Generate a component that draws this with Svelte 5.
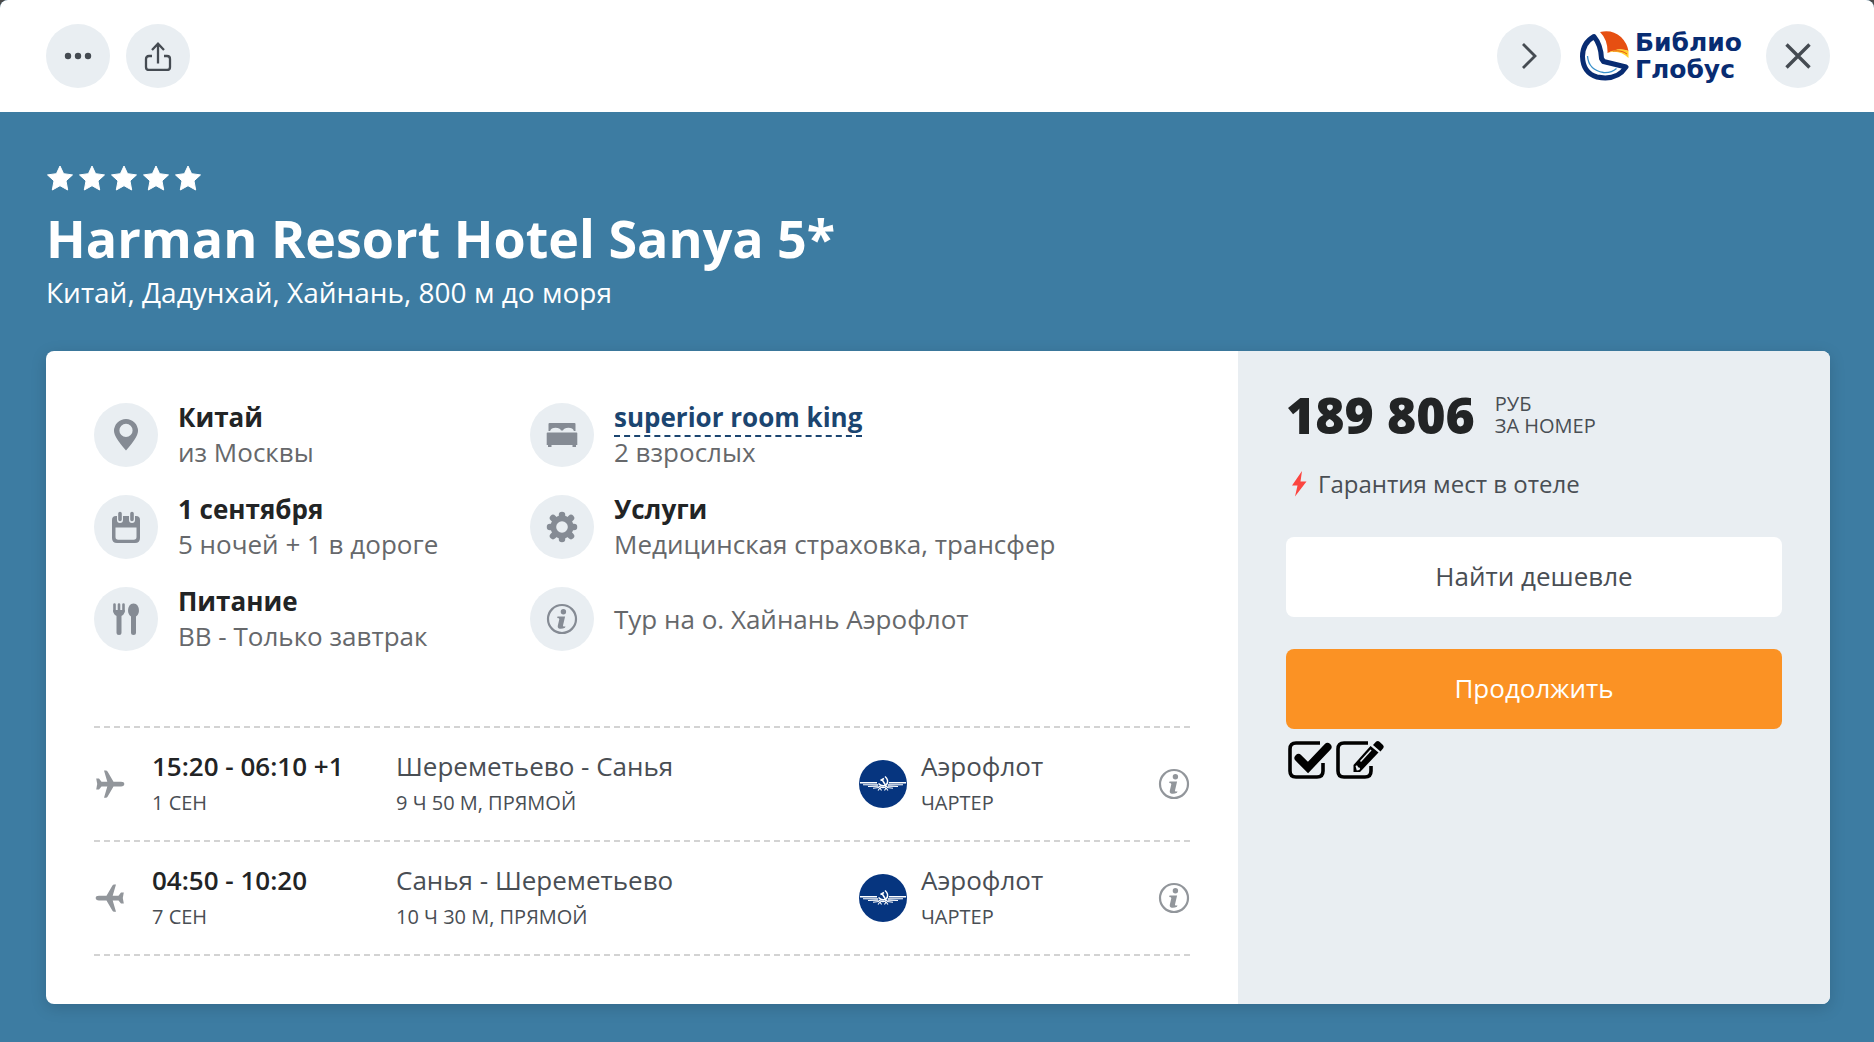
<script>
  const details = [
    { icon: 'pin', title: 'Китай', text: 'из Москвы' },
    { icon: 'bed', title: 'superior room king', text: '2 взрослых', link: true },
    { icon: 'calendar', title: '1 сентября', text: '5 ночей + 1 в дороге' },
    { icon: 'gear', title: 'Услуги', text: 'Медицинская страховка, трансфер' },
    { icon: 'food', title: 'Питание', text: 'BB - Только завтрак' },
    { icon: 'info', title: '', text: 'Тур на о. Хайнань Аэрофлот' }
  ];

  const flights = [
    { back: false, time: '15:20 - 06:10 +1', date: '1 сен', route: 'Шереметьево - Санья', length: '9 ч 50 м, прямой' },
    { back: true, time: '04:50 - 10:20', date: '7 сен', route: 'Санья - Шереметьево', length: '10 ч 30 м, прямой' }
  ];
</script>

{#snippet infoIcon()}
  <svg width="32" height="32" viewBox="0 0 32 32" aria-hidden="true">
    <circle cx="16" cy="16" r="14" fill="none" stroke="currentColor" stroke-width="2.2" />
    <circle cx="17.4" cy="8.8" r="2.7" fill="currentColor" />
    <path d="M11.500 13.400h7.600l-2.100 9q-.3 1.700 2.400.8l-.4 1.500q-2.500 1.200-5 1-2.700-.3-2.200-3l1.500-6.500q.2-1.200-2.100-1.200z" fill="currentColor" />
  </svg>
{/snippet}

<div class="page">
  <header class="topbar">
    <div class="group">
      <button class="round" aria-label="Ещё">
        <svg width="28" height="8" viewBox="0 0 28 8" fill="#454b52"><circle cx="4" cy="4" r="3.200" /><circle cx="14" cy="4" r="3.200" /><circle cx="24" cy="4" r="3.200" /></svg>
      </button>
      <button class="round" aria-label="Поделиться">
        <svg width="28" height="30" viewBox="0 0 28 30" fill="none" stroke="#454b52" stroke-width="2.300"><path d="M14 22.500V3M8 9l6-6.300L20 9M8 15H5q-3 0-3 3v8q0 3 3 3h18q3 0 3-3v-8q0-3-3-3h-3" /></svg>
      </button>
    </div>
    <div class="group">
      <button class="round" aria-label="Следующий">
        <svg width="18" height="28" viewBox="0 0 18 28" fill="none" stroke="#454b52" stroke-width="2.800"><path d="M3 2l12 12L3 26" /></svg>
      </button>
      <a class="brand" href="#operator">
        <svg width="52" height="52" viewBox="0 0 52 52" aria-hidden="true">
          <path d="M15 6.500Q3.500 13 3.500 26.500 4 43 18 47 38 51 47 37L24.500 31.500 22.500 28.500Q22 15 15 6.500z" fill="#fff" stroke="#082c72" stroke-width="5" stroke-linejoin="round" />
          <path d="M8.500 26q1 14 16 16.500 8 .5 13-4" fill="none" stroke="#3a91cb" stroke-width="1.300" />
          <path d="M21 2Q33-1 42 7q6 6 7.500 14Q40 17 28.500 23 29 10 21 2z" fill="#e64f12" />
          <path d="M28.500 23Q40 16.500 49.500 21v7Q40 19 28.500 23z" fill="#ffd02c" />
          <path d="M34 21q9-1 14 3" fill="none" stroke="#e64f12" stroke-width="1" />
        </svg>
        <span>Библио<br />Глобус</span>
      </a>
      <button class="round" aria-label="Закрыть">
        <svg width="28" height="28" viewBox="0 0 28 28" fill="none" stroke="#454b52" stroke-width="3.400"><path d="M2.500 2.500l23 23M25.500 2.500l-23 23" /></svg>
      </button>
    </div>
  </header>

  <main>
    <div class="stars" role="img" aria-label="5 звёзд">
      {#each [1, 2, 3, 4, 5] as star (star)}
        <svg width="28" height="28" viewBox="0 0 28 28"><path d="M14 2l3.600 7.700 8.900 1.200-6.500 6 1.700 9.100L14 21.700 6.300 26 8 16.900l-6.500-6 8.900-1.200z" fill="#fff" stroke="#fff" stroke-linejoin="round" /></svg>
      {/each}
    </div>
    <h1>Harman Resort Hotel Sanya 5*</h1>
    <p class="place">Китай, Дадунхай, Хайнань, 800 м до моря</p>

    <div class="card">
      <section class="tour">
        <div class="details">
          {#each details as item (item.icon)}
            <div class="detail">
              <span class="round">
                {#if item.icon === 'pin'}
                  <svg width="32" height="32" viewBox="0 0 32 32"><path fill-rule="evenodd" d="M16 0a12 12 0 0 0-12 12q0 6 12 19.500Q28 18 28 12A12 12 0 0 0 16 0zm0 4.800a6.600 6.600 0 1 1 0 13.200 6.600 6.600 0 0 1 0-13.200z" fill="currentColor" /></svg>
                {:else if item.icon === 'bed'}
                  <svg width="32" height="32" viewBox="0 0 32 32" fill="currentColor"><path d="M3.500 4h25q1 0 1 1v7h-1.600q-1-3.300-5.500-3.300-4.400 0-5.400 2.800h-2Q14 8.700 9.600 8.700q-4.500 0-5.500 3.300H2.500V5q0-1 1-1zM1.500 13.500h29q.8 0 .8.800V26h-1.300v2h-3.500v-2h-21v2H2v-2H.7V14.300q0-.8.8-.8z" /></svg>
                {:else if item.icon === 'calendar'}
                  <svg width="32" height="32" viewBox="0 0 32 32"><path fill-rule="evenodd" d="M6 5h20q4 0 4 4v18q0 5-5 5H7q-5 0-5-5V9q0-4 4-4zM5.500 16.500V26q0 2.800 2.800 2.800h15.400q2.800 0 2.800-2.800v-9.500z" fill="currentColor" /><path d="M10 2v7M22 2v7" stroke="#e9eef2" stroke-width="6" stroke-linecap="round" /><path d="M10 2.500v6M22 2.500v6" stroke="currentColor" stroke-width="3.600" stroke-linecap="round" /></svg>
                {:else if item.icon === 'gear'}
                  <svg width="32" height="32" viewBox="0 0 32 32"><g stroke="currentColor" stroke-width="6.500" stroke-linecap="round"><path d="M16 4v24M4 16h24M7 7l18 18M25 7L7 25" /></g><circle cx="16" cy="16" r="11.500" fill="currentColor" /><circle cx="16" cy="16" r="5.800" fill="#e9eef2" /></svg>
                {:else if item.icon === 'food'}
                  <svg width="32" height="32" viewBox="0 0 32 32" fill="none" stroke="currentColor" stroke-linecap="round"><path d="M4.500 1.500v7M9 1.500v8M13.500 1.500v7" stroke-width="2.600" /><path d="M3.200 7h11.600q0 5-3.800 6H7q-3.800-1-3.800-6z" fill="currentColor" stroke="none" /><path d="M9 12v17.500M23.500 12v17.500" stroke-width="5" /><path d="M23.500 0.500c7 0 7.500 13.500 0 13.500s-7-13.500 0-13.500z" fill="currentColor" stroke="none" /></svg>
                {:else}
                  {@render infoIcon()}
                {/if}
              </span>
              <div class="words">
                {#if item.link}
                  <a class="room" href="#room">{item.title}</a>
                {:else if item.title}
                  <strong>{item.title}</strong>
                {/if}
                <span>{item.text}</span>
              </div>
            </div>
          {/each}
        </div>

        <div class="flights">
          {#each flights as flight (flight.time)}
            <div class="flight">
              <svg class="plane" class:back={flight.back} width="32" height="32" viewBox="0 0 32 32" aria-hidden="true"><path d="M10 2.500h1.800q1.200 0 1.900 1.300L19.500 13.800H27q3.300 0 3.300 2.200T27 18.400h-7.500L13.700 28.400Q13 29.700 11.800 29.700H10l3.300-11.300H7.500L5 21.500H2.200l1-5.500-1-5.500H5L7.500 13.800h5.800z" fill="currentColor" /></svg>
              <div class="pair">
                <b>{flight.time}</b>
                <small>{flight.date}</small>
              </div>
              <div class="pair">
                <span>{flight.route}</span>
                <small>{flight.length}</small>
              </div>
              <div class="airline">
                <svg width="48" height="48" viewBox="0 0 48 48" aria-hidden="true">
                  <circle cx="24" cy="24" r="24" fill="#06357f" />
                  <g fill="none" stroke="#fff"><path d="M1 22.700h17M30 22.700h17" stroke-width="1.600" /><path d="M4 24.700l15 .2M44 24.700l-15 .2M9 26.500l10-.2M39 26.500l-10-.2M14 28.300l6-.8M34 28.300l-6-.8" stroke-width="1.100" /><path d="M26 16.500q4.500 4 1.500 8-4 3-8-1M21.500 20.500l3.500-2M23 19.500l4 6.500M19.500 26q4.500 3 9 0" stroke-width="1.500" /><path d="M19 30.500l2-2.500 1.500 2.500M25.500 30.500L27 28l2 2.500" stroke-width="1.100" /></g>
                </svg>
                <div class="pair">
                  <span>Аэрофлот</span>
                  <small>чартер</small>
                </div>
              </div>
              <button class="more" aria-label="О рейсе">{@render infoIcon()}</button>
            </div>
          {/each}
        </div>
      </section>

      <aside>
        <div class="price">
          <strong>189 806</strong>
          <span>руб<br />за номер</span>
        </div>
        <p class="guarantee">
          <svg width="24" height="26" viewBox="0 0 24 26" aria-hidden="true"><path d="M16 0L6 14.500h5.500L9 25.500l11.500-15H14.500z" fill="#fb4540" /></svg>
          Гарантия мест в отеле
        </p>
        <button class="wide">Найти дешевле</button>
        <button class="wide main">Продолжить</button>
        <div class="tools">
          <button aria-label="Выбрать">
            <svg width="48" height="44" viewBox="0 0 48 44"><path d="M34 4H10Q4 4 4 10v22q0 6 6 6h21q6 0 6-6v-8" fill="none" stroke="#000" stroke-width="3.600" /><path d="M12.500 19l9.500 9.500L41.500 8" fill="none" stroke="#000" stroke-width="8" stroke-linejoin="miter" stroke-linecap="round" /></svg>
          </button>
          <button aria-label="Изменить">
            <svg width="52" height="44" viewBox="0 0 52 44"><path d="M34 4H10Q4 4 4 10v22q0 6 6 6h21q6 0 6-6v-5" fill="none" stroke="#000" stroke-width="3.600" /><path d="M19.500 33v-7L36.500 7l8 6.500L26 33z" fill="#000" /><path d="M39 6l3.200-3.500q1.800-1.200 3.300.2l3.500 3.200q1.500 1.600.2 3.400L46.500 12.500z" fill="#000" /><path d="M21.500 27l1.500-.8 1.200 2 2 .8-.8 2-2.600.4z" fill="#e9eef2" /><path d="M26.500 22.500L37 11" stroke="#e9eef2" stroke-width="1.500" /></svg>
          </button>
        </div>
      </aside>
    </div>
  </main>
</div>

<style>
  :global(body) {
    margin: 0;
    background: #4a4a4a;
  }
  .page {
    min-height: 100vh;
    display: flex;
    flex-direction: column;
    border-radius: 8px 8px 0 0;
    overflow: hidden;
    background: #3d7ca2;
    color: #494e54;
    font: 26px/35px 'Open Sans', 'Noto Sans', sans-serif;
  }
  button {
    font: inherit;
    color: inherit;
    border: 0;
    padding: 0;
    background: none;
    cursor: pointer;
  }
  svg {
    display: block;
    flex: none;
  }
  h1,
  p {
    margin: 0;
  }
  .topbar {
    display: flex;
    justify-content: space-between;
    align-items: center;
    padding: 24px 44px 24px 46px;
    background: #fff;
  }
  .group {
    display: flex;
    align-items: center;
    gap: 16px;
  }
  .round {
    display: flex;
    align-items: center;
    justify-content: center;
    flex: none;
    width: 64px;
    height: 64px;
    border-radius: 50%;
    background: #e9eef2;
    color: #858b94;
  }
  .brand {
    display: flex;
    align-items: center;
    gap: 4px;
    width: 171px;
    padding-left: 2px;
    color: #082c72;
    text-decoration: none;
    font: 700 25px/27px 'DejaVu Sans', sans-serif;
  }
  main {
    padding: 52px 44px 38px 46px;
  }
  .stars {
    display: flex;
    gap: 4px;
  }
  h1 {
    margin-top: 11px;
    color: #fff;
    font-size: 52px;
    line-height: 69px;
    font-weight: 700;
  }
  .place {
    color: #fff;
    font-size: 28px;
    line-height: 40px;
  }
  .card {
    display: flex;
    margin-top: 39px;
    border-radius: 8px;
    overflow: hidden;
    background: #fff;
    box-shadow: 0 4px 16px rgba(0, 0, 0, 0.15);
  }
  .tour {
    flex: 1;
    padding: 48px;
  }
  .details {
    display: grid;
    grid-template-columns: 436px 1fr;
    row-gap: 20px;
  }
  .detail {
    display: flex;
    align-items: center;
    gap: 20px;
    height: 72px;
  }
  .words {
    display: flex;
    flex-direction: column;
    align-items: flex-start;
    color: #66686b;
  }
  .words strong {
    color: #222425;
  }
  .room {
    height: 35px;
    margin-bottom: -2px;
    border-bottom: 2px dashed #1b4570;
    color: #1b4570;
    font-weight: 700;
    text-decoration: none;
  }
  .flights {
    margin-top: 71px;
    border-top: 2px dashed #d3d3d3;
  }
  .flight {
    display: grid;
    grid-template-columns: 58px 244px 463px 1fr 32px;
    align-items: center;
    height: 112px;
    border-bottom: 2px dashed #d3d3d3;
  }
  .plane {
    color: #92969b;
  }
  .back {
    transform: scaleX(-1);
  }
  .pair {
    display: flex;
    flex-direction: column;
    gap: 1px;
  }
  .pair b {
    color: #222425;
    font-weight: 600;
  }
  small {
    font-size: 20px;
    text-transform: uppercase;
  }
  .airline {
    display: flex;
    align-items: center;
    gap: 14px;
  }
  .more {
    color: #92969b;
  }
  aside {
    display: flex;
    flex-direction: column;
    box-sizing: border-box;
    width: 592px;
    padding: 36px 48px;
    background: #e9eef2;
  }
  .price {
    display: flex;
    align-items: center;
    gap: 20px;
  }
  .price strong {
    color: #222425;
    font-size: 50px;
    line-height: 56px;
    font-weight: 800;
  }
  .price span {
    font-size: 20px;
    line-height: 22px;
    text-transform: uppercase;
  }
  .guarantee {
    display: flex;
    align-items: center;
    gap: 8px;
    margin: 23px 0 35px;
    font-size: 24px;
    line-height: 36px;
  }
  .wide {
    height: 80px;
    padding-bottom: 2px;
    border-radius: 8px;
    background: #fff;
  }
  .main {
    margin-top: 32px;
    background: #fb9224;
    color: #fff;
  }
  .tools {
    display: flex;
    margin-top: 10px;
  }
</style>
